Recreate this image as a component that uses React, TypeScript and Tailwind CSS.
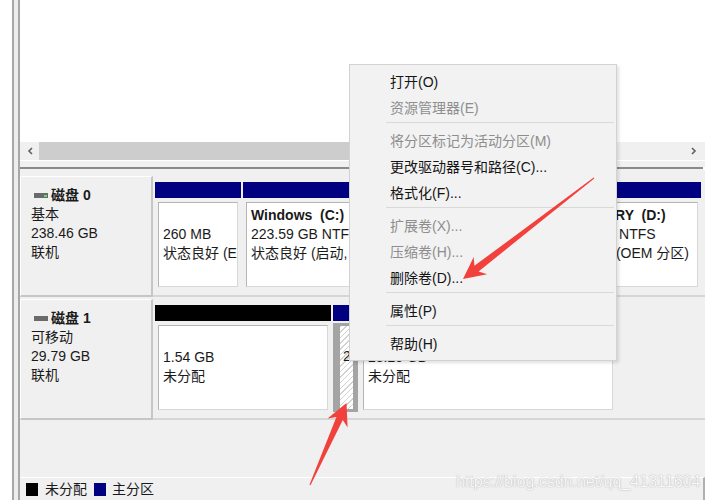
import React from "react";

type Part = {
  w: string;
  bar: string;
  name?: string;
  size?: string;
  status?: string;
  hatched?: boolean;
};

const disk0: Part[] = [
  { w: "w-[86px]", bar: "bg-[#000080]", size: "260 MB", status: "状态良好 (EFI 系统分区)" },
  { w: "w-[303px]", bar: "bg-[#000080]", name: "Windows  (C:)", size: "223.59 GB NTFS", status: "状态良好 (启动, 页面文件, 故障转储, 主分区)" },
  { w: "w-[153px]", bar: "bg-[#000080]", name: "RECOVERY  (D:)", size: "12.00 GB NTFS", status: "状态良好 (OEM 分区)" },
];

const disk1: Part[] = [
  { w: "w-[176px]", bar: "bg-black", size: "1.54 GB", status: "未分配" },
  { w: "w-[25px]", bar: "bg-[#000080]", size: "20 MB", hatched: true },
  { w: "w-[256px]", bar: "bg-black", size: "28.25 GB", status: "未分配" },
];

function Partition({ p }: { p: Part }) {
  return (
    <div className={`${p.w} shrink-0 flex flex-col`}>
      <div className={`h-[16px] ${p.bar}`} />
      {p.hatched ? (
        <div className="mt-[2px] h-[89px] border-y-[3px] border-l-[7px] border-r-[5px] border-[#a4a4a4] bg-[repeating-linear-gradient(135deg,#d2d2d2_0px,#d2d2d2_1px,#ffffff_1px,#ffffff_4px)] overflow-hidden">
          <div className="pl-[3px] pt-[2px] leading-[19px] whitespace-pre">
            <div className="h-[19px]" />
            <div className="w-[9px] overflow-hidden">{p.size}</div>
          </div>
        </div>
      ) : (
        <div className="pt-[4px] px-[3px]">
          <div className="h-[85px] bg-white border border-[#b4b4b4] border-r-[#d8d8d8] border-b-[#d8d8d8] pl-[4px] pt-[3px] leading-[19px] overflow-hidden whitespace-pre">
            <div className="h-[19px] font-bold">{p.name}</div>
            <div>{p.size}</div>
            <div>{p.status}</div>
          </div>
        </div>
      )}
    </div>
  );
}

function DiskIcon({ online }: { online?: boolean }) {
  return (
    <span className="inline-flex ml-[3px] mr-[3px] w-[14px] h-[5px] bg-[#6a6a6a] items-center justify-end pr-[1px]">
      {online && <span className="w-[3px] h-[2px] bg-[#5fe05f]" />}
    </span>
  );
}

function DiskRow({ title, kind, size, parts, online }: { title: string; kind: string; size: string; parts: Part[]; online?: boolean }) {
  return (
    <div className="h-[121px] flex">
      <div className="w-[133px] shrink-0 pl-[10px] pt-[9px] leading-[19px] border-r-2 border-b-2 border-[#c6c6c6] border-l border-l-white border-t border-t-white">
        <div className="flex items-center font-bold">
          <DiskIcon online={online} />
          <span>{title}</span>
        </div>
        <div>{kind}</div>
        <div>{size}</div>
        <div>联机</div>
      </div>
      <div className="flex-1 flex gap-[2px] pl-[2px] pt-[6px] border-b-2 border-[#d6d6d6]">
        {parts.map((p, i) => (
          <Partition key={i} p={p} />
        ))}
      </div>
    </div>
  );
}

const menu: (string | null)[] = [
  "打开(O)",
  "~资源管理器(E)",
  null,
  "~将分区标记为活动分区(M)",
  "更改驱动器号和路径(C)...",
  "格式化(F)...",
  null,
  "~扩展卷(X)...",
  "~压缩卷(H)...",
  "删除卷(D)...",
  null,
  "属性(P)",
  null,
  "帮助(H)",
];

export default function App() {
  return (
    <div className="relative w-[709px] h-[500px] overflow-hidden bg-white flex text-[14px] text-[#1a1a1a] font-['Liberation_Sans','Noto_Sans_CJK_SC',sans-serif]">
      <div className="w-[12px] shrink-0" />
      <div className="w-[8px] shrink-0 border-l-2 border-r-2 border-[#a8a8a8] bg-[#ededed]" />
      <div className="w-[685px] shrink-0 flex flex-col">
        <div className="h-[142px] bg-white" />
        <div className="h-[18px] flex bg-[#f0f0f0]">
          <div className="w-[19px] flex items-center justify-center">
            <svg width="6" height="8" viewBox="0 0 6 8">
              <path d="M5 1 L2 4 L5 7" fill="none" stroke="#606060" strokeWidth="1.6" />
            </svg>
          </div>
          <div className="w-[540px] bg-[#cdcdcd]" />
          <div className="flex-1" />
          <div className="w-[19px] flex items-center justify-center mr-[2px]">
            <svg width="6" height="8" viewBox="0 0 6 8">
              <path d="M1 1 L4 4 L1 7" fill="none" stroke="#606060" strokeWidth="1.6" />
            </svg>
          </div>
        </div>
        <div className="h-[7px] bg-[#f0f0f0] border-t border-white" />
        <div className="h-[3px] bg-[#f0f0f0] border-t-2 border-[#8a8a8a] mr-[2px]" />
        <div className="flex-1 flex flex-col bg-[#f0f0f0] pt-[6px]">
          <DiskRow title="磁盘 0" kind="基本" size="238.46 GB" parts={disk0} online />
          <div className="h-[2px]" />
          <DiskRow title="磁盘 1" kind="可移动" size="29.79 GB" parts={disk1} />
          <div className="flex-1" />
          <div className="h-[23px] flex items-center border-t border-white pl-[6px] border-r-2 border-r-[#b0b0b0]">
            <span className="w-[12px] h-[13px] bg-black" />
            <span className="ml-[7px]">未分配</span>
            <span className="ml-[7px] w-[12px] h-[13px] bg-[#000080]" />
            <span className="ml-[6px]">主分区</span>
          </div>
        </div>
      </div>

      <div className="absolute left-[349px] top-[64px] w-[268px] h-[297px] bg-[#f2f2f2] border border-[#d2d2d2] shadow-[2px_2px_3px_rgba(0,0,0,0.12)] pt-[4px]">
        {menu.map((m, i) =>
          m === null ? (
            <div key={i} className="h-[7px] pt-[1px] pl-[36px] pr-[2px]">
              <div className="h-px bg-[#d9d9d9]" />
            </div>
          ) : (
            <div
              key={i}
              className={`h-[26px] flex items-center pl-[40px] ${m.startsWith("~") ? "text-[#8e8e8e]" : "text-[#141414]"}`}
            >
              {m.replace("~", "")}
            </div>
          )
        )}
      </div>

      <svg className="absolute left-0 top-0" width="709" height="500" viewBox="0 0 709 500">
        <polygon points="463,279 487.1,274.3 478.6,271.4 594.3,178.4 593.7,177.6 474.4,265.8 473.7,256.9" fill="#f2403c" />
        <polygon points="346.5,403 347.6,427.6 342.8,419.9 310.5,485.2 309.5,484.8 336.4,417.1 327.6,418.6" fill="#f2403c" />
      </svg>

      <div className="absolute left-[456px] top-[473px] leading-[18px] text-[16px] text-[#f8f8f8] [text-shadow:0_0_1.3px_#9a9a9a] font-['Liberation_Sans',sans-serif]">
        https://blog.csdn.net/qq_41311604
      </div>
    </div>
  );
}
